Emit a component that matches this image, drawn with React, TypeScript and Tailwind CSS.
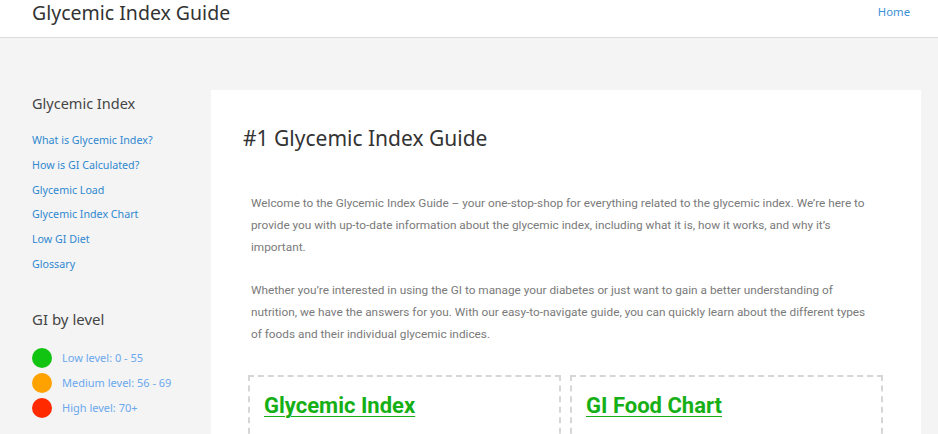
export default function App() {
  const links = [
    "What is Glycemic Index?",
    "How is GI Calculated?",
    "Glycemic Load",
    "Glycemic Index Chart",
    "Low GI Diet",
    "Glossary",
  ];
  const levels = [
    { color: "bg-[#12c412]", label: "Low level: 0 - 55" },
    { color: "bg-[#ffa200]", label: "Medium level: 56 - 69" },
    { color: "bg-[#ff2a00]", label: "High level: 70+" },
  ];

  return (
    <div className="h-[434px] overflow-hidden bg-[#f4f4f4] font-['Noto_Sans',sans-serif]">
      <header className="flex h-[38px] items-start justify-between border-b border-[#dcdcdc] bg-white pl-[32px] pr-[28px]">
        <div className="mt-[-1px] text-[19.5px] leading-[28px] text-[#333]">Glycemic Index Guide</div>
        <a className="mt-[4px] text-[11.3px] text-[#3d8fd6]" href="#">
          Home
        </a>
      </header>

      <div className="flex pl-[32px] pt-[52px]">
        <aside className="w-[179px] shrink-0">
          <h3 className="mt-[2px] text-[14.5px] leading-[22px] text-[#444]">Glycemic Index</h3>
          <ul className="mt-[18px] flex flex-col">
            {links.map((l) => (
              <li className="h-[24.8px] text-[10.7px] leading-[16px] text-[#2f88d0]" key={l}>
                {l}
              </li>
            ))}
          </ul>
          <h3 className="mt-[27px] text-[15px] leading-[22px] text-[#444]">GI by level</h3>
          <ul className="mt-[18px] flex flex-col gap-[5px]">
            {levels.map((lv) => (
              <li className="flex items-center gap-[10px]" key={lv.label}>
                <span className={`h-[20px] w-[20px] rounded-full ${lv.color}`} />
                <span className="text-[11px] text-[#6aa8ee]">{lv.label}</span>
              </li>
            ))}
          </ul>
        </aside>

        <main className="w-[710px] shrink-0 bg-white pl-[32px] pr-[37px] pt-[33px]">
          <h1 className="text-[21px] leading-[30px] text-[#333]">#1 Glycemic Index Guide</h1>
          <div className="mt-[39px] pl-[8px] pr-[13px] font-['Roboto',sans-serif] text-[11.8px] leading-[22px] text-[#7a7a7a]">
            <p>
              Welcome to the Glycemic Index Guide – your one-stop-shop for everything related to the glycemic index. We’re here to
              provide you with up-to-date information about the glycemic index, including what it is, how it works, and why it’s
              important.
            </p>
            <p className="mt-[21px]">
              Whether you’re interested in using the GI to manage your diabetes or just want to gain a better understanding of
              nutrition, we have the answers for you. With our easy-to-navigate guide, you can quickly learn about the different types
              of foods and their individual glycemic indices.
            </p>
          </div>
          <div className="mt-[30px] grid grid-cols-[313px_313px] gap-[9px] pl-[5px]">
            {["Glycemic Index", "GI Food Chart"].map((t) => (
              <div className="h-[80px] border-2 border-dashed border-[#d6d6d6] px-[14px] pt-[15px]" key={t}>
                <a className="font-['Roboto',sans-serif] text-[22px] font-bold leading-[28px] text-[#16b016] underline decoration-1 underline-offset-[3px]" href="#">
                  {t}
                </a>
              </div>
            ))}
          </div>
        </main>
      </div>
    </div>
  );
}
